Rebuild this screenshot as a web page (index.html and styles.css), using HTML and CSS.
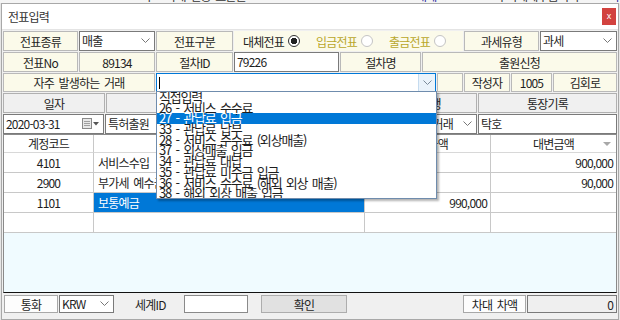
FILE: index.html
```html
<!DOCTYPE html>
<html lang="ko">
<head>
  <meta charset="UTF-8">
  <meta name="viewport" content="width=device-width, initial-scale=1.0">
  <title>전표입력</title>
  <link rel="stylesheet" href="styles.css">
</head>
<body>
  <!-- 뒤쪽 화면 (일부만 보임) -->
  <div class="behind">
    <span class="bt bt1">그리드 자재 인증 표준을</span>
    <span class="bt bt2 blue">대체</span>
    <span class="bt bt3">부가세예수금처리</span>
    <span class="bt bt4 blue">거래처별</span>
    <span class="bt bt5">비고란</span>
  </div>

  <div class="dialog">
    <!-- 타이틀 -->
    <div class="titlebar">
      <span class="title">전표입력</span>
      <button class="close">x</button>
    </div>

    <div class="form">
      <!-- 1행 -->
      <div class="row row1">
        <div class="cell label">전표종류</div>
        <div class="select"><span>매출</span><svg width="9" height="5"><polyline points="0.5,0.5 4.5,4.5 8.5,0.5" fill="none" stroke="#777"/></svg></div>
        <div class="cell label">전표구분</div>
        <div class="radios">
          <span class="radio">대체전표<i class="dot on"></i></span>
          <span class="radio warn">입금전표<i class="dot"></i></span>
          <span class="radio warn">출금전표<i class="dot"></i></span>
        </div>
        <div class="cell label">과세유형</div>
        <div class="select"><span>과세</span><svg width="9" height="5"><polyline points="0.5,0.5 4.5,4.5 8.5,0.5" fill="none" stroke="#777"/></svg></div>
      </div>

      <!-- 2행 -->
      <div class="row row2">
        <div class="cell label">전표No</div>
        <div class="cell label">89134</div>
        <div class="cell label">절차ID</div>
        <div class="input">79226</div>
        <div class="cell label">절차명</div>
        <div class="cell label">출원신청</div>
      </div>

      <!-- 3행 -->
      <div class="row row3">
        <div class="cell label">자주 발생하는 거래</div>
        <div class="combo">
          <span class="caret"></span>
          <span class="combo-btn"><svg width="9" height="5"><polyline points="0.5,0.5 4.5,4.5 8.5,0.5" fill="none" stroke="#7a8a9a"/></svg></span>
          <!-- 펼쳐진 목록 -->
          <ul class="dropdown">
            <li>직접입력</li>
            <li>26 - 서비스 수수료</li>
            <li class="active">27 - 관납료 입금</li>
            <li>33 - 관납료 납부</li>
            <li>28 - 서비스 수수료 (외상매출)</li>
            <li>37 - 외상매출 입금</li>
            <li>34 - 관납료 대납</li>
            <li>35 - 관납료 미수금 입금</li>
            <li>36 - 서비스 수수료 (해외 외상 매출)</li>
            <li>38 - 해외 외상 매출 입금</li>
          </ul>
        </div>
        <div class="cell label"></div>
        <div class="cell label">작성자</div>
        <div class="cell label">1005</div>
        <div class="cell label">김회로</div>
      </div>

      <!-- 4행 -->
      <div class="row row4">
        <div class="cell head">일자</div>
        <div class="cell head">거래처</div>
        <div class="cell head">은행</div>
        <div class="cell head">통장기록</div>
      </div>

      <!-- 5행 -->
      <div class="row row5">
        <div class="input date">
          <span>2020-03-31</span>
          <svg width="18" height="11">
            <rect x="0.5" y="0.5" width="9" height="10" fill="#e8e8e8" stroke="#8a8a8a"/>
            <line x1="2" y1="3.5" x2="8" y2="3.5" stroke="#a0a0a0"/>
            <line x1="2" y1="5.5" x2="8" y2="5.5" stroke="#a0a0a0"/>
            <line x1="2" y1="7.5" x2="8" y2="7.5" stroke="#a0a0a0"/>
            <polygon points="11,4 17,4 14,7.5" fill="#555"/>
          </svg>
        </div>
        <div class="select"><span>특허출원</span><svg width="9" height="5"><polyline points="0.5,0.5 4.5,4.5 8.5,0.5" fill="none" stroke="#777"/></svg></div>
        <div class="select"><span>국민은행</span><svg width="9" height="5"><polyline points="0.5,0.5 4.5,4.5 8.5,0.5" fill="none" stroke="#777"/></svg></div>
        <div class="select"><span>일반거래</span><svg width="9" height="5"><polyline points="0.5,0.5 4.5,4.5 8.5,0.5" fill="none" stroke="#777"/></svg></div>
        <div class="input">탁호</div>
      </div>

      <!-- 분개 그리드 -->
      <div class="grid">
        <div class="gh">계정코드</div>
        <div class="gh">계정과목</div>
        <div class="gh">차변금액</div>
        <div class="gh sort">대변금액<i class="tri"></i></div>

        <div class="gc center">4101</div>
        <div class="gc">서비스수입</div>
        <div class="gc num"></div>
        <div class="gc num">900,000</div>

        <div class="gc center">2900</div>
        <div class="gc">부가세 예수금</div>
        <div class="gc num"></div>
        <div class="gc num">90,000</div>

        <div class="gc center">1101</div>
        <div class="gc selected">보통예금</div>
        <div class="gc num">990,000</div>
        <div class="gc num"></div>

        <div class="gc"></div>
        <div class="gc"></div>
        <div class="gc"></div>
        <div class="gc"></div>
      </div>

      <!-- 하단 -->
      <div class="bottombar">
        <div class="cell plain w-currency">통화</div>
        <div class="select w-krw"><span>KRW</span><svg width="9" height="5"><polyline points="0.5,0.5 4.5,4.5 8.5,0.5" fill="none" stroke="#777"/></svg></div>
        <div class="text w-id">세계ID</div>
        <div class="input w-idin"></div>
        <button class="btn">확인</button>
        <div class="cell plain w-diff">차대 차액</div>
        <div class="readonly">0</div>
      </div>
    </div>
  </div>
</body>
</html>
```

FILE: styles.css
```css
* {
  margin: 0;
  padding: 0;
  box-sizing: border-box;
}

body {
  width: 620px;
  height: 320px;
  overflow: hidden;
  background: #e6e6e6;
  font-family: "Noto Sans CJK KR", sans-serif;
  font-size: 12px;
  letter-spacing: -0.8px;
  word-spacing: 2px;
  color: #1e1e1e;
}

/* 뒤에 깔린 창 */
.behind {
  height: 3px;
  overflow: hidden;
  display: flex;
  background: #f4f4f4;
  line-height: 14px;
  white-space: nowrap;
}

.bt {
  margin-top: -11px;
  color: #333;
}

.bt.blue { color: #2a2aa0; }
.bt1 { margin-left: 130px; }
.bt2 { margin-left: 170px; }
.bt3 { margin-left: 60px; }
.bt4 { margin-left: 30px; }
.bt5 { margin-left: 50px; }

.dialog {
  margin: 0 1px;
  height: 317px;
  border: 1px solid #a8a8a8;
  background: #f0f0f0;
  padding: 0 1px 4px;
}

.titlebar {
  height: 26px;
  margin: 0 -1px;
  background: #fff;
  display: flex;
  align-items: center;
  justify-content: space-between;
  padding: 0 2px 0 6px;
  border-bottom: 1px solid #e4e4e4;
}

.title {
  color: #333;
}

.close {
  width: 14px;
  height: 17px;
  border: none;
  background: #d2423f;
  color: #fff;
  font-family: "Liberation Sans", sans-serif;
  font-size: 9px;
  letter-spacing: 0;
  line-height: 17px;
}

.form {
  padding-top: 1px;
}

.row {
  display: grid;
  column-gap: 1px;
  margin-bottom: 1px;
  height: 20px;
}

.row1 { grid-template-columns: 75px 76px 77px 229px 75px 1fr; }
.row2 { grid-template-columns: 75px 76px 77px 105px 81px 1fr; }
.row3 { grid-template-columns: 152px 280px 26px 46px 41px 1fr; height: 19px; }
.row4 { grid-template-columns: 102px 277px 93px 1fr; }
.row5 { grid-template-columns: 101px 195px 107px 68px 1fr; margin-bottom: 0; }

.cell {
  display: flex;
  align-items: center;
  justify-content: center;
  border: 1px solid #b9b9b9;
  white-space: nowrap;
}

.label {
  background: #fbfaea;
}

.head {
  background: #f0f0f0;
  border-color: #b0b0b0;
}

.plain {
  background: #fdfdfd;
  border-color: #a8a8a8;
}

.select, .input {
  display: flex;
  align-items: center;
  justify-content: space-between;
  background: #fff;
  border: 1px solid #7a7a7a;
  padding: 0 4px 1px 2px;
  white-space: nowrap;
  overflow: hidden;
}

.select svg { flex-shrink: 0; }

.input {
  justify-content: flex-start;
}

.date {
  justify-content: space-between;
  padding-right: 3px;
}

/* 라디오 */
.radios {
  display: flex;
  align-items: center;
  gap: 16px;
  padding-left: 9px;
  background: #fbfaea;
}

.radio {
  display: flex;
  align-items: center;
  gap: 4px;
}

.radio.warn {
  color: #b9a72a;
}

.dot {
  width: 12px;
  height: 12px;
  border-radius: 50%;
  border: 1px solid #c4c4c4;
  background: #fff;
}

.dot.on {
  border-color: #333;
  background: radial-gradient(circle, #222 0 3px, #fff 3.5px);
}

/* 콤보 */
.combo {
  position: relative;
  background: #fff;
  border: 1px solid #0078d7;
  display: flex;
  align-items: center;
  justify-content: space-between;
}

.caret {
  width: 1px;
  height: 12px;
  margin-left: 2px;
  background: #000;
}

.combo-btn {
  width: 17px;
  height: 100%;
  display: flex;
  align-items: center;
  justify-content: center;
  background: #eaf3fb;
  border-left: 1px solid #c5dbef;
}

.dropdown {
  position: absolute;
  top: 100%;
  left: -1px;
  width: 281px;
  height: 108px;
  list-style: none;
  background: #fff;
  border: 1px solid #6f8cad;
  box-shadow: 2px 2px 2px rgba(0, 0, 0, 0.3);
  overflow: hidden;
  z-index: 10;
}

.dropdown li {
  height: 10.7px;
  line-height: 10.7px;
  padding-left: 2px;
  font-size: 13px;
  letter-spacing: -1.2px;
  word-spacing: 2px;
  white-space: nowrap;
}

.dropdown li.active {
  background: #0078d7;
  color: #fff;
}

/* 그리드 */
.grid {
  display: grid;
  grid-template-columns: 90px 271px 126px 1fr;
  grid-template-rows: 18px 20px 20px 20px 20px;
  height: 159px;
  border: 1px solid #8a8a8a;
  border-bottom-color: #111;
  background: #f0fbff;
}

.gh, .gc {
  display: flex;
  align-items: center;
  border-right: 1px solid #c8c8c8;
  border-bottom: 1px solid #c8c8c8;
  background: #fff;
  padding: 0 4px;
  white-space: nowrap;
}

.gh {
  justify-content: center;
  border-bottom-color: #d8d8d8;
}

.gh:nth-child(4n), .gc:nth-child(4n) {
  border-right: none;
}

.sort {
  position: relative;
}

.tri {
  position: absolute;
  right: 5px;
  top: 7px;
  border-left: 4px solid transparent;
  border-right: 4px solid transparent;
  border-top: 4px solid #a8a8a8;
}

.center { justify-content: center; }
.num { justify-content: flex-end; padding-right: 3px; }

.gc.selected {
  background: #0078d7;
  color: #fff;
}

/* 하단 */
.bottombar {
  display: flex;
  height: 18px;
  margin-top: 2px;
}

.w-currency { width: 54px; margin-left: 1px; }
.w-krw { width: 55px; margin-left: 1px; }
.w-id { width: 49px; margin-left: 21px; display: flex; align-items: center; }
.w-idin { width: 64px; border-color: #8a8a8a; }
.w-diff { width: 63px; margin-left: auto; }

.btn {
  width: 86px;
  margin-left: 13px;
  background: #e1e1e1;
  border: 1px solid #adadad;
  font: inherit;
  letter-spacing: -0.8px;
  color: #1e1e1e;
}

.readonly {
  width: 90px;
  margin-left: 1px;
  display: flex;
  align-items: center;
  justify-content: flex-end;
  padding-right: 3px;
  background: #efefef;
  border: 1px solid #7a7a7a;
}
```
